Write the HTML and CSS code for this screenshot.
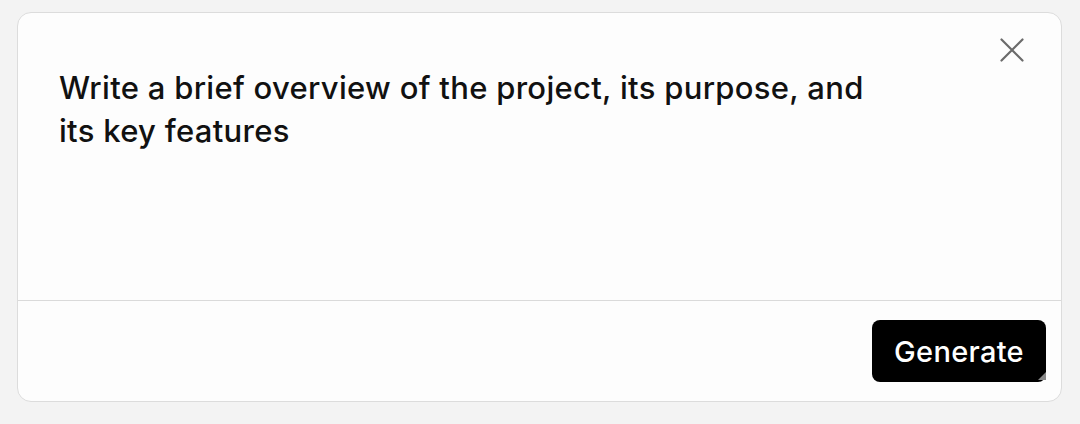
FILE: index.html
```html
<!DOCTYPE html>
<html>
<head>
<meta charset="utf-8">
<link rel="stylesheet" href="styles.css">
</head>
<body>
<div class="card">
  <div class="editor">
    <div class="prompt">Write a brief overview of the project, its purpose, and<br>its key features</div>
    <button class="close" aria-label="Close">
      <svg width="24" height="24" viewBox="0 0 24 24"><path d="M1.5 1.5L22.5 22.5M22.5 1.5L1.5 22.5" stroke="#6b6b6b" stroke-width="2.2" stroke-linecap="round" fill="none"/></svg>
    </button>
  </div>
  <div class="footer">
    <button class="generate">Generate<span class="grip"></span></button>
  </div>
</div>
</body>
</html>
```
FILE: styles.css
```css
html, body { margin: 0; padding: 0; }
body {
  background: #f3f3f3;
  width: 1080px;
  height: 424px;
  padding: 12px 18px 22px 17px;
  box-sizing: border-box;
  font-family: Inter, "Noto Sans", sans-serif;
}
.card {
  height: 390px;
  background: #fdfdfd;
  border: 1px solid #dcdcdc;
  border-radius: 14px;
  box-sizing: border-box;
  display: flex;
  flex-direction: column;
  overflow: hidden;
}
.editor {
  height: 288px;
  border-bottom: 1.5px solid #dadada;
  box-sizing: border-box;
  display: flex;
  justify-content: space-between;
  align-items: flex-start;
  padding: 25px 37px 0 41px;
}
.prompt {
  margin-top: 28px;
  font-size: 31px;
  font-weight: 500;
  line-height: 43px;
  letter-spacing: 0.3px;
  color: #111;
  white-space: nowrap;
}
.close {
  background: none;
  border: 0;
  padding: 0;
  width: 24px;
  height: 24px;
  display: flex;
}
.footer {
  flex: 1;
  display: flex;
  justify-content: flex-end;
  align-items: flex-start;
  padding: 19px 15px 0 0;
}
.generate {
  position: relative;
  width: 174px;
  height: 62px;
  background: #000;
  color: #fff;
  border: 0;
  border-radius: 8px;
  font-family: Inter, "Noto Sans", sans-serif;
  font-size: 29px;
  font-weight: 500;
  letter-spacing: 0.3px;
  padding: 0;
}
.grip {
  position: absolute;
  right: 0;
  bottom: 2px;
  width: 0;
  height: 0;
  border-left: 8px solid transparent;
  border-bottom: 8px solid #888;
}
```
